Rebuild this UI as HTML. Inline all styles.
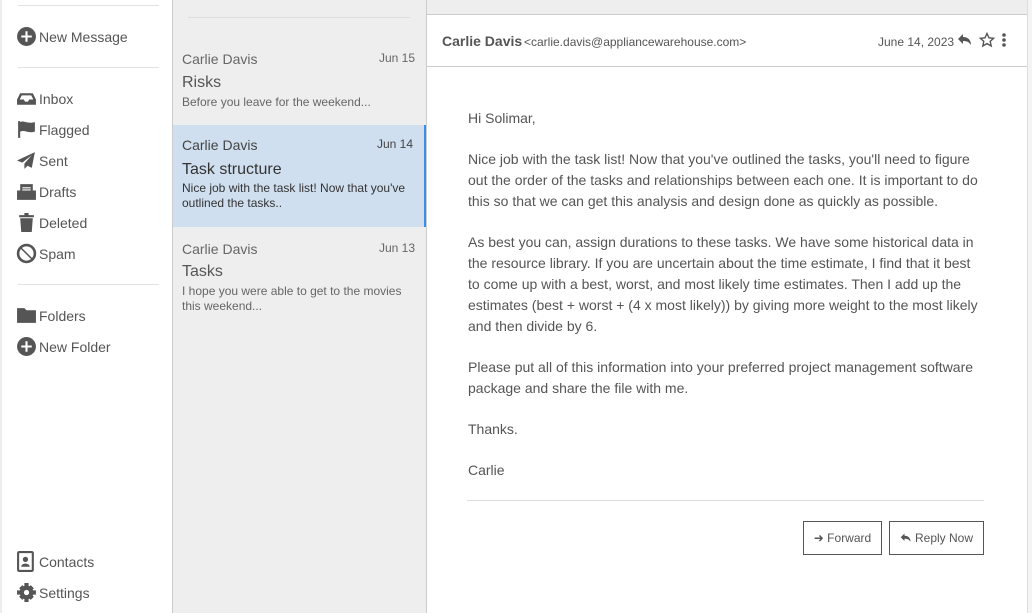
<!DOCTYPE html>
<html><head><meta charset="utf-8"><style>
*{box-sizing:border-box;margin:0;padding:0}
body{width:1032px;height:613px;overflow:hidden;font-family:"Liberation Sans",sans-serif;color:#555;background:#fff;position:relative}
.side{position:absolute;left:0;top:0;width:173px;height:613px;background:#fff;border-left:2px solid #eee;border-right:1px solid #ccc}
.hr{position:absolute;left:16px;width:141px;height:1px;background:#e2e2e2}
.it{position:absolute;left:14px;font-size:14px;display:flex;align-items:center;gap:2px;color:#555}
.it svg{width:21px;height:21px;fill:#555}
.list{position:absolute;left:173px;top:0;width:254px;height:613px;background:#eee;border-right:1px solid #ccc}
.msg{position:absolute;left:0;width:253px;padding:0 10px 0 9px}
.msg .n{position:absolute;left:9px;font-size:14px;color:#666}
.msg .d{position:absolute;right:11px;font-size:12px;color:#666}
.msg .s{position:absolute;left:9px;font-size:16px;color:#555}
.msg .p{position:absolute;left:9px;right:10px;font-size:12px;line-height:15px;color:#666}
.main{position:absolute;left:427px;top:0;width:605px;height:613px;background:#fff}
.top{position:absolute;left:0;top:0;width:600px;height:15px;background:#eee;border-bottom:1px solid #ccc}
.hdr{position:absolute;left:0;top:15px;width:600px;height:52px;border-bottom:1px solid #ccc}
.body{position:absolute;left:41px;top:108px;width:512px;font-size:14px;line-height:21px;color:#555}
.body p{margin-bottom:20px}
.btn{position:absolute;top:521px;height:34px;border:1px solid #555;font-size:12px;display:flex;align-items:center;justify-content:center;gap:3px;color:#555}
</style></head><body>
<div class="side">
<div class="hr" style="top:5px"></div>
<div class="it" style="top:26px"><svg viewBox="0 0 20 20"><circle cx="10" cy="10" r="9"/><path d="M9 5h2v4h4v2h-4v4H9v-4H5V9h4z" fill="#fff"/></svg>New Message</div>
<div class="hr" style="top:67px"></div>
<div class="it" style="top:88px"><svg viewBox="0 0 20 20"><path d="M1 11l3-6h12l3 6v5H1z"/><path d="M3.5 11l2-4h9l2 4h-4l-1 2H8.5l-1-2z" fill="#fff"/></svg>Inbox</div>
<div class="it" style="top:119px"><svg viewBox="0 0 20 20"><path d="M2 2h2v16H2z M4 3c4-2 6 2 14 0v9c-7 2-9-2-14 0z"/></svg>Flagged</div>
<div class="it" style="top:150px"><svg viewBox="0 0 20 20"><path d="M18 2L1 10l5 2 9-7-7 8v5l3-3 4 2z"/></svg>Sent</div>
<div class="it" style="top:181px"><svg viewBox="0 0 20 20"><path d="M1 9h18v9H1z M4 3h12v8H4z"/><path d="M6 6h8v1H6zM6 8h8v1H6z" fill="#fff"/></svg>Drafts</div>
<div class="it" style="top:212px"><svg viewBox="0 0 20 20"><path d="M3 3h14v2H3z M4 6h12l-1 13H5z M8 1h4v2H8z"/></svg>Deleted</div>
<div class="it" style="top:243px"><svg viewBox="0 0 20 20"><circle cx="10" cy="10" r="8" fill="none" stroke="#555" stroke-width="2.5"/><path d="M4 5l1-1 11 11-1 1z"/></svg>Spam</div>
<div class="hr" style="top:284px"></div>
<div class="it" style="top:305px"><svg viewBox="0 0 20 20"><path d="M1 3h7l2 2h9v12H1z"/></svg>Folders</div>
<div class="it" style="top:336px"><svg viewBox="0 0 20 20"><circle cx="10" cy="10" r="9"/><path d="M9 5h2v4h4v2h-4v4H9v-4H5V9h4z" fill="#fff"/></svg>New Folder</div>
<div class="it" style="top:551px"><svg viewBox="0 0 20 20"><rect x="2" y="1" width="14" height="18" rx="1" fill="none" stroke="#555" stroke-width="2"/><circle cx="9" cy="8" r="2.5"/><path d="M5 15c0-4 8-4 8 0z"/></svg>Contacts</div>
<div class="it" style="top:582px"><svg viewBox="0 0 20 20"><circle cx="10" cy="10" r="6.5"/><path d="M8 1h4v4H8zM8 15h4v4H8zM1 8h4v4H1zM15 8h4v4h-4z"/><path d="M3 6l3-3 3 3-3 3zM11 14l3-3 3 3-3 3zM14 3l3 3-3 3-3-3zM6 11l3 3-3 3-3-3z"/><circle cx="10" cy="10" r="2.5" fill="#fff"/></svg>Settings</div>
</div>
<div class="list">
<div style="position:absolute;left:15px;top:17px;width:222px;height:1px;background:#ddd"></div>
<div class="msg" style="top:40px;height:85px"><span class="n" style="top:11px">Carlie Davis</span><span class="d" style="top:11px">Jun 15</span><span class="s" style="top:34px">Risks</span><span class="p" style="top:55px">Before you leave for the weekend...</span></div>
<div class="msg" style="top:125px;height:102px;background:#d0dfef;border-right:2px solid #3b8ee6"><span class="n" style="top:12px;color:#444">Carlie Davis</span><span class="d" style="top:12px;color:#444">Jun 14</span><span class="s" style="top:36px;color:#333">Task structure</span><span class="p" style="top:56px;color:#333">Nice job with the task list! Now that you've outlined the tasks..</span></div>
<div class="msg" style="top:228px;height:100px"><span class="n" style="top:13px">Carlie Davis</span><span class="d" style="top:13px">Jun 13</span><span class="s" style="top:35px">Tasks</span><span class="p" style="top:56px">I hope you were able to get to the movies this weekend...</span></div>
</div>
<div class="main">
<div class="top"></div>
<div class="hdr">
<span style="position:absolute;left:15px;top:18px;font-size:14px;font-weight:bold;color:#555">Carlie Davis</span>
<span style="position:absolute;left:97px;top:20px;font-size:12px;color:#555">&lt;carlie.davis@appliancewarehouse.com&gt;</span>
<span style="position:absolute;left:451px;top:20px;font-size:12px;color:#555">June 14, 2023</span>
<svg style="position:absolute;left:530px;top:17px" width="16" height="16" viewBox="0 0 16 16"><path d="M6 2L1 7l5 5V9c4 0 6 1 8 4 0-5-3-8-8-8z" fill="#555"/></svg>
<svg style="position:absolute;left:552px;top:17px" width="16" height="16" viewBox="0 0 16 16"><path d="M8 1.5l2 4.3 4.6.5-3.4 3.1 1 4.6L8 11.6 3.8 14l1-4.6L1.4 6.3 6 5.8z" fill="none" stroke="#555" stroke-width="1.4"/></svg>
<svg style="position:absolute;left:574px;top:17px" width="6" height="16" viewBox="0 0 6 16"><circle cx="3" cy="3" r="1.8" fill="#555"/><circle cx="3" cy="8" r="1.8" fill="#555"/><circle cx="3" cy="13" r="1.8" fill="#555"/></svg>
</div>
<div class="body">
<p>Hi Solimar,</p>
<p>Nice job with the task list! Now that you've outlined the tasks, you'll need to figure out the order of the tasks and relationships between each one. It is important to do this so that we can get this analysis and design done as quickly as possible.</p>
<p>As best you can, assign durations to these tasks. We have some historical data in the resource library. If you are uncertain about the time estimate, I find that it best to come up with a best, worst, and most likely time estimates. Then I add up the estimates (best + worst + (4 x most likely)) by giving more weight to the most likely and then divide by 6.</p>
<p>Please put all of this information into your preferred project management software package and share the file with me.</p>
<p>Thanks.</p>
<p>Carlie</p>
</div>
<div style="position:absolute;left:40px;top:500px;width:517px;height:1px;background:#ddd"></div>
<div class="btn" style="left:376px;width:79px">&#10140; Forward</div>
<div class="btn" style="left:462px;width:95px"><svg width="12" height="12" viewBox="0 0 16 16"><path d="M6 2L1 7l5 5V9c4 0 6 1 8 4 0-5-3-8-8-8z" fill="#555"/></svg>Reply Now</div>
<div style="position:absolute;left:600px;top:0;width:5px;height:613px;background:#f4f4f4;border-left:1px solid #ddd"></div>
</div>
</body></html>
